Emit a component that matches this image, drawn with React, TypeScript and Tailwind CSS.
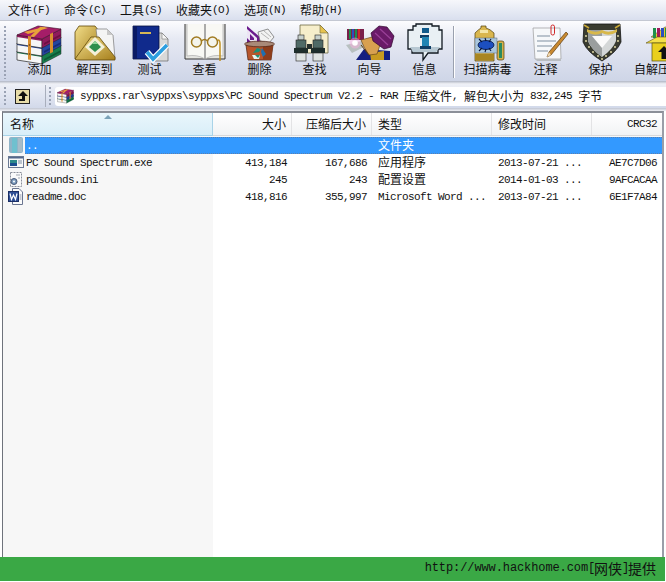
import React from "react";

const mono = "font-['Liberation_Mono','DejaVu_Sans_Mono',monospace] text-[11px] tracking-[-0.6px] leading-[14px]";
const cjk = "font-['Noto_Sans_CJK_SC','Liberation_Sans',sans-serif] text-[12px] leading-[14px]";

function Ico({ children, w = 48, h = 38 }: { children: React.ReactNode; w?: number; h?: number }) {
  return (
    <svg width={w} height={h} viewBox={`0 0 ${w} ${h}`} className="shrink-0 overflow-visible">
      {children}
    </svg>
  );
}

function RarStack() {
  const layers = [
    { c: "#8f1a5c", d: "#6d0f42" },
    { c: "#25459f", d: "#172d78" },
    { c: "#167d4d", d: "#0d5a36" },
  ];
  return (
    <g>
      {[2, 1, 0].map((i) => {
        const y = i * 8;
        return (
          <g key={i}>
            <polygon points={`1,${10 + y} 26,${14 + y} 26,${23 + y} 1,${19 + y}`} fill="#f6f6f6" stroke="#222" strokeWidth="0.7" />
            <polygon points={`1,${10 + y} 26,${14 + y} 26,${16 + y} 1,${12 + y}`} fill={layers[i].c} />
            <polygon points={`26,${14 + y} 45,${4 + y} 45,${13 + y} 26,${23 + y}`} fill={layers[i].c} stroke="#222" strokeWidth="0.5" />
            <polygon points={`28,${18 + y} 45,${9 + y} 45,${11 + y} 28,${20 + y}`} fill={layers[i].d} />
          </g>
        );
      })}
      <polygon points="1,10 22,1 45,4 26,14" fill="#a51d68" stroke="#3a0a25" strokeWidth="0.6" />
      <polygon points="8,7 28,2 32,3 12,9" fill="#e8a23a" />
      <polygon points="24,2 28,2 18,12 14,11.5" fill="#e8a23a" />
      <polygon points="12,11 15,11.5 15,35 12,34.5" fill="#d98f2e" />
      <polygon points="34,9 37,7.5 37,27 34,28.5" fill="#d98f2e" />
      <circle cx="13.5" cy="20" r="0.8" fill="#6b3b08" />
      <circle cx="13.5" cy="29" r="0.8" fill="#6b3b08" />
    </g>
  );
}

const icons = {
  add: (
    <Ico><g transform="translate(0,2)"><RarStack /></g></Ico>
  ),
  extract: (
    <Ico>
      <defs>
        <linearGradient id="g1" x1="0" y1="0" x2="1" y2="1">
          <stop offset="0" stopColor="#f2de8a" />
          <stop offset="1" stopColor="#a67f1c" />
        </linearGradient>
      </defs>
      <path d="M4 36 V9 L8 3 H24 L28 8 V22 L8 36 Z" fill="url(#g1)" stroke="#5f4708" strokeWidth="0.8" />
      <polygon points="25,6 36,6 42,12 44,36 28,30" fill="#f4f4f4" stroke="#777" strokeWidth="0.7" />
      <polygon points="36,6 36,12 42,12" fill="#c9c9c9" />
      <polygon points="4,36 20,14 28,14 44,34 44,37 6,37" fill="url(#g1)" stroke="#5f4708" strokeWidth="0.8" />
      <polygon points="24,14 34,24 24,33 14,24" fill="#f4f0d8" />
      <polygon points="24,18 30,24 24,29 18,24" fill="#2f8f4e" />
      <polygon points="24,18 27,21 21,21" fill="#8fd49a" />
    </Ico>
  ),
  test: (
    <Ico>
      <polygon points="29,10 36,10 42,16 42,38 29,38" fill="#d9d9d9" stroke="#666" strokeWidth="0.7" />
      <polygon points="36,10 36,16 42,16" fill="#f7f7f7" stroke="#666" strokeWidth="0.5" />
      <polygon points="7,3 33,3 33,33 28,36 7,36" fill="#102a8c" stroke="#050f40" strokeWidth="0.8" />
      <rect x="7" y="3" width="4" height="33" fill="#0a1a64" />
      <rect x="14" y="9" width="11" height="2" fill="#d5b656" />
      <polyline points="21,29 27,36 41,22" fill="none" stroke="#ffffff" strokeWidth="6" />
      <polyline points="21,29 27,36 41,22" fill="none" stroke="#2d9fe0" strokeWidth="3.6" />
    </Ico>
  ),
  view: (
    <Ico>
      <path d="M4 1 V36 H44 V1" fill="#e4e4e0" stroke="#333" strokeWidth="1" />
      <path d="M6 1 V33 Q16 31 24 36 Q32 31 42 33 V1" fill="#f8f8f4" stroke="#aaa" strokeWidth="0.7" />
      <line x1="24" y1="1" x2="24" y2="36" stroke="#8a8a8a" strokeWidth="1.4" />
      <circle cx="15.5" cy="19" r="5" fill="#f4f4ec" stroke="#a07a20" strokeWidth="1.5" />
      <circle cx="31.5" cy="19" r="5" fill="#f4f4ec" stroke="#a07a20" strokeWidth="1.5" />
      <path d="M20.5 18 Q23.5 15 26.5 18" fill="none" stroke="#a07a20" strokeWidth="1.2" />
      <path d="M37 17 Q39 17 39 21 V38" fill="none" stroke="#c09020" strokeWidth="1.5" />
    </Ico>
  ),
  del: (
    <Ico>
      <polygon points="11,3 25,15 25,21 11,21" fill="#6a1a8c" />
      <polygon points="11,6 21,15 21,19 15,19 11,15" fill="#ece4f4" />
      <polygon points="14,11 18,15 18,17 14,17" fill="#6a1a8c" />
      <polygon points="22,9 32,6 38,14 33,20 24,18" fill="#f2f2f2" stroke="#666" strokeWidth="0.7" />
      <path d="M25 10 L33 16 M28 8 L35 14" stroke="#a5a5a5" strokeWidth="0.8" />
      <path d="M10 22 L37 22 L35 37 H12 Z" fill="#b7562c" stroke="#4c2010" strokeWidth="0.7" />
      <path d="M27 23 L37 22 L35 37 H27 Z" fill="#8d3d1b" />
      <ellipse cx="23.5" cy="21" rx="15" ry="2.8" fill="#a98a78" stroke="#4c2010" strokeWidth="0.7" />
      <path d="M17 30 L21 25 L25 26 L23 29 Z" fill="#1b8f7a" />
      <path d="M26 25 L30 31 L27 34 L25 29 Z" fill="#1d6fb0" />
      <path d="M16 32 L24 32 L23 36 L18 36 Z" fill="#e8f2f0" />
      <path d="M19 32 L24 32 L22 35 Z" fill="#1b8f7a" />
    </Ico>
  ),
  find: (
    <Ico>
      <polygon points="9,2 29,2 37,10 37,30 9,30" fill="#f6eecb" stroke="#6f6a45" strokeWidth="0.8" />
      <polygon points="29,2 29,10 37,10" fill="#e7c34e" stroke="#6f6a45" strokeWidth="0.6" />
      {[4, 21].map((x) => (
        <g key={x}>
          <rect x={x + 3} y="12" width="6" height="5" fill="#c6d0cc" stroke="#222" strokeWidth="0.6" />
          <rect x={x + 1} y="17" width="10" height="8" fill="#4f6a66" stroke="#222" strokeWidth="0.6" />
          <rect x={x - 1} y="25" width="14" height="5" fill="#1e2e2c" />
          <rect x={x + 1} y="30" width="10" height="8" fill="#dfe3e2" stroke="#222" strokeWidth="0.6" />
        </g>
      ))}
      <rect x="16" y="21" width="5" height="5" fill="#26302e" />
    </Ico>
  ),
  wizard: (
    <Ico>
      <rect x="1" y="6" width="17" height="11" fill="#7a1f4a" />
      <rect x="3" y="6" width="2" height="10" fill="#1d8f4a" />
      <rect x="6" y="6" width="2" height="10" fill="#2a4fc0" />
      <rect x="9" y="6" width="2" height="10" fill="#1d8f4a" />
      <rect x="12" y="6" width="2" height="10" fill="#d02a2a" />
      <polygon points="0,22 16,18 20,23 6,30" fill="#b8c0c0" />
      <circle cx="9" cy="20" r="5.5" fill="#ffb0e0" opacity="0.45" />
      <circle cx="9" cy="20" r="2.8" fill="#ffffff" />
      <polygon points="10,37 18,26 44,28 44,37" fill="#141e80" />
      <polygon points="24,30 38,28 38,37 25,37" fill="#c89a20" />
      <polygon points="15,17 26,14 34,22 31,31 23,32 18,24" fill="#d8a050" stroke="#5a3a10" strokeWidth="0.6" />
      <path d="M15 22 L23 32" stroke="#5a3a10" strokeWidth="1" />
      <polygon points="25,10 33,3 41,4 48,13 45,24 38,26 27,18" fill="#6a1a68" stroke="#30082e" strokeWidth="0.7" />
      <path d="M29 10 L42 22 M34 6 L45 16" stroke="#9a4098" strokeWidth="1.2" />
    </Ico>
  ),
  info: (
    <Ico>
      <polygon points="12,3 15,3 15,1 31,1 31,3 38,3 38,7 41,7 41,26 37,26 37,30 27,30 22,37 22,30 11,30 11,26 7,26 7,7 12,7" fill="#e9f0f4" stroke="#101820" strokeWidth="1.3" />
      <polygon points="9,24 39,24 35,29 12,29" fill="#b7c8d2" />
      <rect x="21" y="5" width="7" height="5" fill="#0f5a8c" />
      <rect x="19" y="12" width="9" height="3" fill="#0f3e66" />
      <rect x="21" y="14" width="7" height="9" fill="#1e84b4" />
      <rect x="19" y="23" width="11" height="3" fill="#0f3e66" />
    </Ico>
  ),
  scan: (
    <Ico>
      <rect x="33" y="18" width="7" height="19" rx="2" fill="#d5b04a" stroke="#4f3d0c" strokeWidth="0.7" />
      <rect x="35" y="20" width="3" height="15" fill="#2a8a60" />
      <path d="M11 10 Q15 6 17 5 V3 H22 V5 Q26 6 30 10 V38 H11 Z" fill="#d9b64e" stroke="#4f3d0c" strokeWidth="0.7" />
      <rect x="16" y="7" width="8" height="3" fill="#f4e6a8" />
      <rect x="11" y="15" width="22" height="15" fill="#a9c6dc" stroke="#5d6a74" strokeWidth="0.5" />
      <rect x="11" y="31" width="19" height="6" fill="#a88622" />
      <ellipse cx="22" cy="22" rx="8" ry="4.5" fill="#1c4fc0" stroke="#06143c" strokeWidth="0.8" />
      <path d="M15 16 L18 19 M21 15 L22 18 M27 16 L25 19 M15 28 L18 25 M21 29 L22 26 M27 28 L25 25" stroke="#06143c" strokeWidth="1.1" />
    </Ico>
  ),
  note: (
    <Ico>
      <polygon points="11,5 38,5 39,36 13,36" fill="#f6f8fa" stroke="#999" strokeWidth="0.7" />
      <polygon points="13,36 39,36 39,38 15,38" fill="#b8bcc0" />
      <path d="M15 13 H28 M15 18 H34 M15 23 H30 M15 28 H26" stroke="#7f8fa0" strokeWidth="1" />
      <rect x="29" y="2" width="3.5" height="10" rx="1.7" fill="none" stroke="#d02828" strokeWidth="1" />
      <polygon points="44,9 46,11 29,32 25,34 27,29" fill="#c98a30" stroke="#5c3a10" strokeWidth="0.7" />
      <polygon points="27,29 29,32 25,34" fill="#f2d9b0" />
    </Ico>
  ),
  protect: (
    <Ico>
      <g transform="translate(2,1)">
        <path d="M5 0 H41 L42 18 Q38 28 23 37 Q8 28 4 18 Z" fill="#3a3c30" stroke="#151515" strokeWidth="0.8" />
        <path d="M9 6 H37 L37 17 Q34 25 23 33 Q12 25 9 17 Z" fill="#d4d7d7" />
        <path d="M9 6 H23 V33 Q12 25 9 17 Z" fill="#9a9e9e" />
        <polygon points="13,12 33,12 23,24" fill="#fafafa" />
        <path d="M8 5 Q16 10 23 6 Q30 10 38 5 L38 8 Q30 13 23 9 Q16 13 8 8 Z" fill="#d8b84a" />
        {[
          [7, 12], [7, 17], [10, 23], [14, 28], [19, 32], [39, 12], [39, 17], [36, 23], [32, 28], [27, 32], [23, 35],
        ].map(([x, y], i) => (
          <circle key={i} cx={x} cy={y} r="0.9" fill="#f0e8b0" />
        ))}
        <path d="M5 1 L10 4 M41 1 L36 4" stroke="#c8a838" strokeWidth="1.5" />
      </g>
    </Ico>
  ),
  sfx: (
    <Ico>
      <g transform="translate(3,0)">
        <polygon points="20,14 34,4 50,4 36,16" fill="#e8c92a" stroke="#555" strokeWidth="0.6" />
        <rect x="22" y="5" width="3" height="10" fill="#1d8f4a" />
        <rect x="26" y="5" width="3" height="10" fill="#a01a5c" />
        <rect x="30" y="5" width="3" height="10" fill="#2a4fc0" />
        <rect x="34" y="5" width="3" height="10" fill="#1d8f4a" />
        <polygon points="15,20 26,14 44,14 44,20" fill="#f4e04a" stroke="#5a5010" strokeWidth="0.6" />
        <rect x="21" y="20" width="24" height="18" fill="#e9cf1e" stroke="#5a5010" strokeWidth="0.7" />
        <polygon points="33,23 39,29 35.5,29 35.5,36 30.5,36 30.5,29 27,29" fill="#111" />
      </g>
    </Ico>
  ),
};

const tools: { label: string; icon: React.ReactNode; w: string }[] = [
  { label: "添加", icon: icons.add, w: "w-[55px]" },
  { label: "解压到", icon: icons.extract, w: "w-[55px]" },
  { label: "测试", icon: icons.test, w: "w-[55px]" },
  { label: "查看", icon: icons.view, w: "w-[55px]" },
  { label: "删除", icon: icons.del, w: "w-[55px]" },
  { label: "查找", icon: icons.find, w: "w-[55px]" },
  { label: "向导", icon: icons.wizard, w: "w-[55px]" },
  { label: "信息", icon: icons.info, w: "w-[55px]" },
];
const tools2: { label: string; icon: React.ReactNode; w: string }[] = [
  { label: "扫描病毒", icon: icons.scan, w: "w-[61px]" },
  { label: "注释", icon: icons.note, w: "w-[55px]" },
  { label: "保护", icon: icons.protect, w: "w-[55px]" },
  { label: "自解压", icon: icons.sfx, w: "w-[48px]" },
];

function Tool({ label, icon, w }: { label: string; icon: React.ReactNode; w: string }) {
  return (
    <div className={`${w} shrink-0 flex flex-col items-center`}>
      {icon}
      <span className={`${cjk} mt-[1px] text-[#111] whitespace-nowrap`}>{label}</span>
    </div>
  );
}

function Gripper() {
  return (
    <div className="w-[4px] self-stretch shrink-0 my-[2px] bg-[radial-gradient(circle,#9aa2b4_1px,transparent_1px)] bg-[length:4px_4px]" />
  );
}

const menus = [
  ["文件", "(F)"],
  ["命令", "(C)"],
  ["工具", "(S)"],
  ["收藏夹", "(O)"],
  ["选项", "(N)"],
  ["帮助", "(H)"],
];

const cols = "grid grid-cols-[79px_80px_120px_100px_70px]";

const rows = [
  { icon: "up", name: "..", size: "", packed: "", type: "文件夹", cjkType: true, time: "", crc: "", sel: true },
  { icon: "exe", name: "PC Sound Spectrum.exe", size: "413,184", packed: "167,686", type: "应用程序", cjkType: true, time: "2013-07-21 ...", crc: "AE7C7D06", sel: false },
  { icon: "ini", name: "pcsounds.ini", size: "245", packed: "243", type: "配置设置", cjkType: true, time: "2014-01-03 ...", crc: "9AFCACAA", sel: false },
  { icon: "doc", name: "readme.doc", size: "418,816", packed: "355,997", type: "Microsoft Word ...", cjkType: false, time: "2013-07-21 ...", crc: "6E1F7A84", sel: false },
];

function FileIcon({ kind }: { kind: string }) {
  if (kind === "up")
    return (
      <svg width="16" height="17" viewBox="0 0 16 17">
        <rect x="1" y="0" width="14" height="16" rx="2" fill="#8fb4c8" />
        <rect x="4" y="1" width="5" height="15" fill="#6fc0cf" />
        <rect x="10" y="1" width="4" height="14" fill="#a8bcc8" />
      </svg>
    );
  if (kind === "exe")
    return (
      <svg width="16" height="17" viewBox="0 0 16 17">
        <rect x="0.5" y="2.5" width="15" height="11" fill="#f8f8f8" stroke="#6b7a94" />
        <rect x="1" y="3" width="14" height="1.5" fill="#55688c" />
        <rect x="2" y="6" width="7" height="6" fill="#2d8a8a" />
        <rect x="2" y="9" width="7" height="3" fill="#1b4f8f" />
        <path d="M10 7 H14 M10 9 H14" stroke="#7f8fa4" />
      </svg>
    );
  if (kind === "ini")
    return (
      <svg width="16" height="17" viewBox="0 0 16 17">
        <rect x="2.5" y="1.5" width="11" height="14" fill="#fafafa" stroke="#8a8f9a" strokeDasharray="2 1" />
        <circle cx="6" cy="10.5" r="3" fill="#7a9abc" stroke="#4a5a78" />
        <circle cx="6" cy="10.5" r="1" fill="#fff" />
        <path d="M8 4 H12 M10 7 H12" stroke="#a0a6b0" />
      </svg>
    );
  return (
    <svg width="16" height="17" viewBox="0 0 16 17">
      <polygon points="4.5,0.5 11,0.5 14.5,4 14.5,16.5 4.5,16.5" fill="#fbfbfb" stroke="#6a7590" />
      <rect x="0.5" y="3.5" width="10" height="10" fill="#2f4f96" stroke="#1b2f66" />
      <path d="M2 5.5 L3.5 11.5 L5.5 7 L7.5 11.5 L9 5.5" fill="none" stroke="#fff" strokeWidth="1.2" />
      <path d="M11.5 7 H13.5 M11.5 9 H13.5 M11.5 11 H13.5" stroke="#8a92a6" />
    </svg>
  );
}

export default function App() {
  return (
    <div className="w-[666px] h-[582px] flex flex-col overflow-hidden bg-white text-[#111]">
      {/* menu */}
      <div className="h-[20px] shrink-0 flex items-center gap-[14px] pl-[8px] bg-[linear-gradient(180deg,#f6f7fb,#d9dfee)]">
        {menus.map(([a, b]) => (
          <div key={a} className="flex items-center whitespace-nowrap">
            <span className={cjk}>{a}</span>
            <span className={`${mono} w-[18px] text-center`}>{b}</span>
          </div>
        ))}
      </div>
      <div className="h-[1px] shrink-0 bg-[#c4c8d2]" />
      {/* toolbar */}
      <div className="h-[60px] shrink-0 flex pl-[3px] pt-[2px] bg-[linear-gradient(180deg,#fcfcfe_0%,#e6e9f3_30%,#ced5e7_100%)] overflow-hidden">
        <Gripper />
        <div className="w-[5px] shrink-0" />
        {tools.map((t) => (
          <Tool key={t.label} {...t} />
        ))}
        <div className="w-[2px] ml-[1px] mr-[2px] my-[3px] shrink-0 bg-[#9aa0ae] border-r border-white" />
        {tools2.map((t) => (
          <Tool key={t.label} {...t} />
        ))}
      </div>
      <div className="h-[3px] shrink-0 bg-[linear-gradient(180deg,#b0b6c4,#f2f3f7)]" />
      {/* address bar */}
      <div className="h-[24px] shrink-0 flex items-center pl-[3px] bg-[linear-gradient(180deg,#eef0f7,#d2d9ea)]">
        <Gripper />
        <div className="w-[38px] shrink-0 flex pl-[8px]">
          <svg width="15" height="15" viewBox="0 0 15 15">
            <rect x="0.5" y="0.5" width="14" height="14" fill="#e7dca8" stroke="#222" />
            <polygon points="8,2 13,7 10,7 10,12 4,12 4,10 7,10 7,7 3,7" fill="#111" />
          </svg>
        </div>
        <div className="w-[1px] self-stretch my-[1px] bg-[#a8aebc]" />
        <div className="w-[2px] shrink-0" />
        <Gripper />
        <div className="flex-1 h-[19px] ml-[3px] flex items-center pl-[2px] bg-white rounded-l-[3px] whitespace-nowrap overflow-hidden">
          <svg width="17" height="17" viewBox="0 0 46 42" className="shrink-0">
            <RarStack />
          </svg>
          <span className={`${mono} ml-[6px]`}>syppxs.rar\syppxs\syppxs\PC Sound Spectrum V2.2 - RAR</span>
          <span className={`${cjk} ml-[6px]`}>压缩文件</span>
          <span className={mono}>,</span>
          <span className={`${cjk} ml-[6px]`}>解包大小为</span>
          <span className={`${mono} ml-[6px]`}>832,245</span>
          <span className={`${cjk} ml-[6px]`}>字节</span>
        </div>
      </div>
      <div className="h-[3px] shrink-0 bg-[linear-gradient(180deg,#c0c5d2,#f0f1f5)]" />
      {/* list */}
      <div className="flex-1 min-h-0 ml-[2px] mr-[2px] border-t-[2px] border-l-[1px] border-r-[2px] border-t-[#8b8f98] border-l-[#6f737c] border-r-[#9a9ea8] flex flex-col">
        <div className="h-[23px] shrink-0 flex items-stretch bg-[linear-gradient(180deg,#ffffff,#f1f2f4)] relative">
          <div className="w-[210px] shrink-0 flex items-center pl-[7px] bg-[linear-gradient(180deg,#e9f6fc,#d9eef8)] border-r border-b border-r-[#a9d3e8] border-b-[#a9d3e8]">
            <span className={cjk}>名称</span>
          </div>
          <svg width="8" height="4" viewBox="0 0 8 4" className="absolute left-[101px] top-[2px]">
            <polygon points="4,0 8,4 0,4" fill="#7aa2b8" />
          </svg>
          <div className={`${cols} flex-1 border-b border-b-[#d8d8da]`}>
            <div className={`${cjk} flex items-center justify-end pr-[5px] border-r border-[#e3e3e5]`}>大小</div>
            <div className={`${cjk} flex items-center justify-end pr-[5px] border-r border-[#e3e3e5]`}>压缩后大小</div>
            <div className={`${cjk} flex items-center pl-[6px] border-r border-[#e3e3e5]`}>类型</div>
            <div className={`${cjk} flex items-center pl-[6px] border-r border-[#e3e3e5]`}>修改时间</div>
            <div className={`${mono} flex items-center justify-end pr-[5px]`}>CRC32</div>
          </div>
        </div>
        <div className="h-[1px] shrink-0 bg-[#f7f7f7]" />
        <div className="flex-1 min-h-0 bg-[linear-gradient(90deg,#f7f7f7_210px,#ffffff_210px)]">
          {rows.map((r) => (
            <div key={r.name} className="h-[17px] flex">
              <div className="w-[22px] shrink-0 pl-[5px] flex items-center">
                <FileIcon kind={r.icon} />
              </div>
              <div className={`flex-1 flex ${r.sel ? "bg-[#3399ff] text-white border-y border-dotted border-y-[#5a7fb0]" : ""}`}>
                <div className={`${mono} w-[188px] shrink-0 flex items-center pl-[1px] whitespace-nowrap`}>{r.name}</div>
                <div className={`${cols} flex-1`}>
                  <div className={`${mono} flex items-center justify-end pr-[5px]`}>{r.size}</div>
                  <div className={`${mono} flex items-center justify-end pr-[5px]`}>{r.packed}</div>
                  <div className={`${r.cjkType ? `${cjk} pb-[2px]` : mono} flex items-center pl-[6px] whitespace-nowrap`}>{r.type}</div>
                  <div className={`${mono} flex items-center pl-[6px] whitespace-nowrap`}>{r.time}</div>
                  <div className={`${mono} flex items-center justify-end pr-[5px]`}>{r.crc}</div>
                </div>
              </div>
            </div>
          ))}
        </div>
      </div>
      {/* green footer */}
      <div className="h-[24px] w-[665px] shrink-0 flex items-center justify-end pr-[9px] pb-[2px] bg-[#3aa845]">
        <span className="font-['Liberation_Mono','DejaVu_Sans_Mono',monospace] text-[12px] tracking-[-0.1px] text-[#111] whitespace-nowrap">http://www.hackhome.com</span>
        <span className="font-['Liberation_Mono','DejaVu_Sans_Mono',monospace] text-[12px] w-[6px] text-[#111]">[</span>
        <span className="font-['Noto_Sans_CJK_SC',sans-serif] text-[14px] leading-[16px] text-[#111] whitespace-nowrap">网侠</span>
        <span className="font-['Liberation_Mono','DejaVu_Sans_Mono',monospace] text-[12px] w-[6px] text-[#111]">]</span>
        <span className="font-['Noto_Sans_CJK_SC',sans-serif] text-[14px] leading-[16px] text-[#111] whitespace-nowrap">提供</span>
      </div>
      <div className="h-[1px] shrink-0 bg-white" />
    </div>
  );
}
